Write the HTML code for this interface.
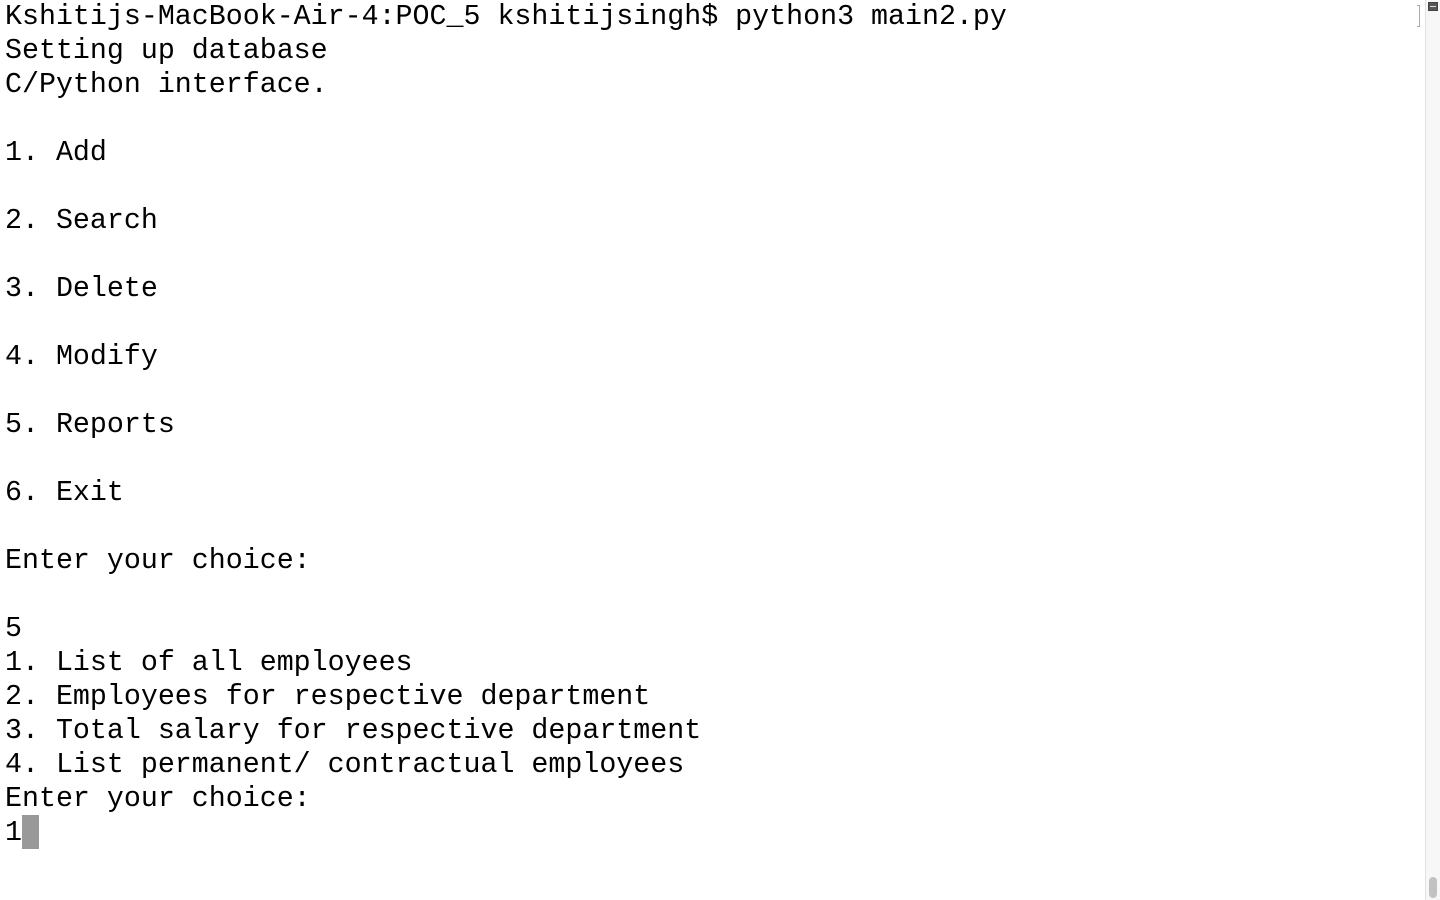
<!DOCTYPE html>
<html><head><meta charset="utf-8"><style>
html,body{margin:0;padding:0;background:#fff;width:1440px;height:900px;overflow:hidden}
pre{position:absolute;left:5px;top:0px;margin:0;font-family:"Liberation Mono",monospace;font-size:28.3px;line-height:34px;color:#000;letter-spacing:0}
.cur{display:inline-block;width:17px;height:34px;background:#999;vertical-align:top;margin-top:-1px}
.sb{position:absolute;left:1425px;top:0;width:15px;height:900px;background:#f7f7f7;border-left:1px solid #e2e2e2}
.th{position:absolute;left:1429px;top:877px;width:8px;height:21px;border-radius:4px;background:#c2c2c2}
.ic{position:absolute;left:1428px;top:2px;width:10px;height:9px;background:#555;border:1px solid #444;box-sizing:border-box}
.ic:after{content:"";position:absolute;left:1px;right:1px;top:3px;height:1px;background:#ddd}
.br{position:absolute;left:1417px;top:5px;width:2px;height:20px;border:1px solid #aaa;border-left:none}
</style></head><body>
<pre>Kshitijs-MacBook-Air-4:POC_5 kshitijsingh$ python3 main2.py
Setting up database
C/Python interface.

1. Add

2. Search

3. Delete

4. Modify

5. Reports

6. Exit

Enter your choice:

5
1. List of all employees
2. Employees for respective department
3. Total salary for respective department
4. List permanent/ contractual employees
Enter your choice:
1<span class="cur"></span></pre>
<div class="sb"></div><div class="th"></div><div class="ic"></div><div class="br"></div>
</body></html>
